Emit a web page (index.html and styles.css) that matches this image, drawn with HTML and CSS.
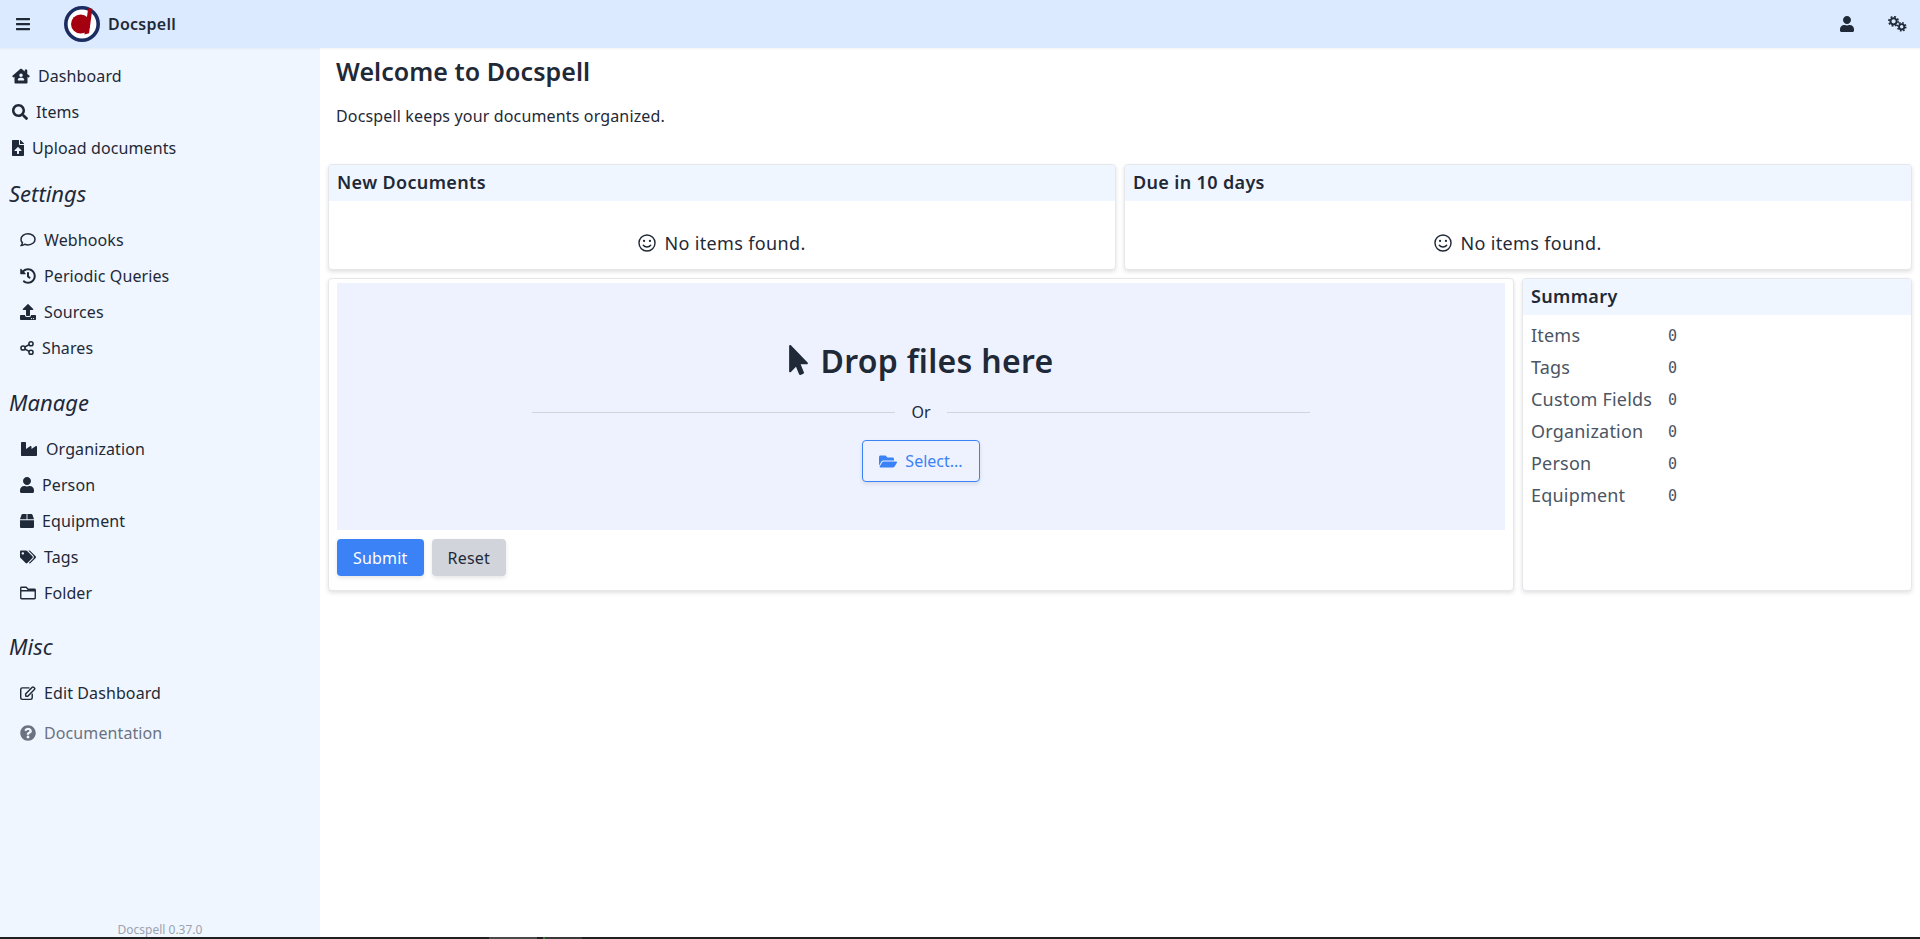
FILE: index.html
```html
<!DOCTYPE html>
<html lang="en">
<head>
  <meta charset="UTF-8">
  <title>Docspell</title>
  <link rel="stylesheet" href="styles.css">
</head>
<body>
  <svg class="icon-defs" width="0" height="0" aria-hidden="true">
    <symbol id="i-bars" viewBox="0 0 448 512"><path d="M16 132h416c8.837 0 16-7.163 16-16V76c0-8.837-7.163-16-16-16H16C7.163 60 0 67.163 0 76v40c0 8.837 7.163 16 16 16zm0 160h416c8.837 0 16-7.163 16-16v-40c0-8.837-7.163-16-16-16H16c-8.837 0-16 7.163-16 16v40c0 8.837 7.163 16 16 16zm0 160h416c8.837 0 16-7.163 16-16v-40c0-8.837-7.163-16-16-16H16c-8.837 0-16 7.163-16 16v40c0 8.837 7.163 16 16 16z"/></symbol>
    <symbol id="i-user" viewBox="0 0 448 512"><path d="M224 256c70.7 0 128-57.3 128-128S294.7 0 224 0 96 57.3 96 128s57.3 128 128 128zm89.6 32h-16.7c-22.2 10.2-46.9 16-72.9 16s-50.6-5.8-72.9-16h-16.7C60.2 288 0 348.2 0 422.4V464c0 26.5 21.5 48 48 48h352c26.5 0 48-21.5 48-48v-41.6c0-74.2-60.2-134.4-134.4-134.4z"/></symbol>
    <symbol id="i-cogs" viewBox="0 0 640 512">
      <g fill="none" stroke="currentColor">
        <circle cx="210" cy="170" r="100" stroke-width="64"/>
        <circle cx="210" cy="170" r="150" stroke-width="50" stroke-dasharray="60 57.8"/>
        <circle cx="470" cy="345" r="85" stroke-width="60"/>
        <circle cx="470" cy="345" r="130" stroke-width="50" stroke-dasharray="52 50.1"/>
      </g>
    </symbol>
    <symbol id="i-house" viewBox="0 0 576 512"><path fill-rule="evenodd" d="M288 20c6 0 11 2 16 6l104 86V64c0-9 7-16 16-16h48c9 0 16 7 16 16v125l73 60c8 7 9 18 3 25l-20 25c-6 8-17 9-25 3l-23-19v180c0 18-14 32-32 32H112c-18 0-32-14-32-32V279l-23 19c-8 6-19 5-25-3l-20-25c-6-7-5-18 3-25L272 26c5-4 10-6 16-6zM288 176a56 56 0 1 0 0 112 56 56 0 0 0 0-112zM200 400h176c9 0 16-7 16-16 0-40-32-72-72-72h-64c-40 0-72 32-72 72 0 9 7 16 16 16z"/></symbol>
    <symbol id="i-search" viewBox="0 0 512 512"><path d="M505 442.7L405.3 343c-4.5-4.5-10.6-7-17-7H372c27.6-35.3 44-79.7 44-128C416 93.1 322.9 0 208 0S0 93.1 0 208s93.1 208 208 208c48.3 0 92.7-16.4 128-44v16.3c0 6.4 2.5 12.5 7 17l99.7 99.7c9.4 9.4 24.6 9.4 33.9 0l28.3-28.3c9.4-9.4 9.4-24.6.1-34zM208 336c-70.7 0-128-57.2-128-128 0-70.7 57.2-128 128-128 70.7 0 128 57.2 128 128 0 70.7-57.2 128-128 128z"/></symbol>
    <symbol id="i-file-upload" viewBox="0 0 384 512"><path d="M224 136V0H24C10.7 0 0 10.7 0 24v464c0 13.3 10.7 24 24 24h336c13.3 0 24-10.7 24-24V160H248c-13.2 0-24-10.8-24-24zm65.18 216.01H224v80c0 8.84-7.16 16-16 16h-32c-8.84 0-16-7.16-16-16v-80H94.82c-14.28 0-21.41-17.29-11.27-27.36l96.42-95.7c6.65-6.61 17.39-6.61 24.04 0l96.42 95.7c10.15 10.07 3.03 27.36-11.25 27.36zM377 105L279.1 7c-4.5-4.5-10.6-7-17-7H256v128h128v-6.1c0-6.3-2.5-12.4-7-16.9z"/></symbol>
    <symbol id="i-comment" viewBox="0 0 512 512"><path fill="none" stroke="currentColor" stroke-width="48" stroke-linejoin="round" d="M256 56C132 56 32 136 32 236c0 42 18 80 48 110-10 40-30 68-48 90 40-2 88-16 122-44 32 12 66 20 102 20 124 0 224-80 224-176S380 56 256 56z"/></symbol>
    <symbol id="i-history" viewBox="0 0 512 512"><path d="M504 255.531c.253 136.64-111.18 248.372-247.82 248.468-59.015.042-113.223-20.53-155.822-54.911-11.077-8.94-11.905-25.541-1.839-35.607l11.267-11.267c8.609-8.609 22.353-9.551 31.891-1.984C173.062 425.135 212.781 440 256 440c101.705 0 184-82.311 184-184 0-101.705-82.311-184-184-184-48.814 0-93.149 18.969-126.068 49.932l50.754 50.754c10.08 10.08 2.941 27.314-11.313 27.314H24c-8.837 0-16-7.163-16-16V38.627c0-14.254 17.234-21.393 27.314-11.314l49.372 49.372C129.209 34.136 189.552 8 256 8c136.81 0 247.747 110.78 248 247.531zm-180.912 78.784l9.823-12.63c8.138-10.463 6.253-25.542-4.21-33.679L288 256.349V152c0-13.255-10.745-24-24-24h-16c-13.255 0-24 10.745-24 24v135.651l65.409 50.874c10.463 8.137 25.541 6.253 33.679-4.21z"/></symbol>
    <symbol id="i-upload" viewBox="0 0 512 512"><path d="M296 384h-80c-13.3 0-24-10.7-24-24V192h-87.7c-17.8 0-26.7-21.5-14.1-34.1L242.3 5.7c7.5-7.5 19.8-7.5 27.3 0l152.2 152.2c12.6 12.6 3.7 34.1-14.1 34.1H320v168c0 13.3-10.7 24-24 24zm216-8v112c0 13.3-10.7 24-24 24H24c-13.3 0-24-10.7-24-24V376c0-13.3 10.7-24 24-24h136v8c0 30.9 25.1 56 56 56h80c30.9 0 56-25.1 56-56v-8h136c13.3 0 24 10.7 24 24zm-124 88c0-11-9-20-20-20s-20 9-20 20 9 20 20 20 20-9 20-20zm64 0c0-11-9-20-20-20s-20 9-20 20 9 20 20 20 20-9 20-20z"/></symbol>
    <symbol id="i-share" viewBox="0 0 512 512"><g fill="none" stroke="currentColor" stroke-width="56"><circle cx="110" cy="256" r="76"/><circle cx="402" cy="100" r="76"/><circle cx="402" cy="412" r="76"/><path d="M175 221L337 135M175 291L337 377"/></g></symbol>
    <symbol id="i-industry" viewBox="0 0 512 512"><path d="M475.115 163.781L336 252.309v-68.28c0-18.916-20.931-30.399-36.885-20.248L160 252.309V56c0-13.255-10.745-24-24-24H24C10.745 32 0 42.745 0 56v400c0 13.255 10.745 24 24 24h464c13.255 0 24-10.745 24-24V184.029c0-18.917-20.931-30.399-36.885-20.248z"/></symbol>
    <symbol id="i-box" viewBox="0 0 512 512"><path d="M509.5 184.6L458.9 32.8C452.4 13.2 434.1 0 413.4 0H272v192h238.7c-.4-2.5-.4-5-1.2-7.4zM240 0H98.6c-20.7 0-39 13.2-45.5 32.8L2.5 184.6c-.8 2.4-.8 4.9-1.2 7.4H240V0zM0 224v240c0 26.5 21.5 48 48 48h416c26.5 0 48-21.5 48-48V224H0z"/></symbol>
    <symbol id="i-tags" viewBox="0 0 640 512"><path d="M497.941 225.941L286.059 14.059A48 48 0 0 0 252.118 0H48C21.49 0 0 21.49 0 48v204.118a48 48 0 0 0 14.059 33.941l211.882 211.882c18.744 18.745 49.136 18.746 67.882 0l204.118-204.118c18.745-18.745 18.745-49.137 0-67.882zM112 160c-26.51 0-48-21.49-48-48s21.49-48 48-48 48 21.49 48 48-21.49 48-48 48zm513.941 133.823L421.823 497.941c-18.745 18.745-49.137 18.745-67.882 0l-.36-.36L527.64 323.522c16.999-16.999 26.36-39.6 26.36-63.64s-9.362-46.641-26.36-63.64L331.397 0h48.721a48 48 0 0 1 33.941 14.059l211.882 211.882c18.745 18.745 18.745 49.137 0 67.882z"/></symbol>
    <symbol id="i-folder" viewBox="0 0 512 512"><path fill="none" stroke="currentColor" stroke-width="44" stroke-linejoin="round" d="M48 72h152l56 64h208c13 0 24 11 24 24v256c0 13-11 24-24 24H48c-13 0-24-11-24-24V96c0-13 11-24 24-24zM24 184h464"/></symbol>
    <symbol id="i-edit" viewBox="0 0 576 512"><path fill="none" stroke="currentColor" stroke-width="52" stroke-linecap="round" stroke-linejoin="round" d="M440 300v130c0 32-24 56-56 56H82c-32 0-56-24-56-56V128c0-32 24-56 56-56h240M210 370l-10-76L440 50c14-14 36-14 50 0l30 30c14 14 14 36 0 50L280 374z"/></symbol>
    <symbol id="i-question" viewBox="0 0 512 512"><path d="M504 256c0 136.997-111.043 248-248 248S8 392.997 8 256C8 119.083 119.043 8 256 8s248 111.083 248 248zM262.655 90c-54.497 0-89.255 22.957-116.549 63.758-3.536 5.286-2.353 12.415 2.715 16.258l34.699 26.31c5.205 3.947 12.621 3.008 16.665-2.122 17.864-22.658 30.113-35.797 57.303-35.797 20.429 0 45.698 13.148 45.698 32.958 0 14.976-12.363 22.667-32.534 33.976C247.128 238.528 216 254.941 216 296v4c0 6.627 5.373 12 12 12h56c6.627 0 12-5.373 12-12v-1.333c0-28.462 83.186-29.647 83.186-106.667 0-58.002-60.165-102-116.531-102zM256 338c-25.365 0-46 20.635-46 46 0 25.364 20.635 46 46 46s46-20.636 46-46c0-25.365-20.635-46-46-46z"/></symbol>
    <symbol id="i-smile" viewBox="0 0 512 512"><g fill="none" stroke="currentColor" stroke-width="40" stroke-linecap="round"><circle cx="256" cy="256" r="228"/><path d="M150 320c50 64 162 64 212 0"/></g><circle cx="172" cy="196" r="32"/><circle cx="340" cy="196" r="32"/></symbol>
    <symbol id="i-pointer" viewBox="0 0 320 512"><path d="M302.189 329.126H196.105l55.831 135.993c3.889 9.428-.555 19.999-9.444 23.999l-49.165 21.427c-9.165 4-19.443-.571-23.332-9.714l-53.053-129.136-86.664 89.138C18.729 472.71 0 463.554 0 447.977V18.299C0 1.899 19.921-6.096 30.277 5.443l284.412 292.542c11.472 11.179 3.007 31.141-12.5 31.141z"/></symbol>
    <symbol id="i-folder-open" viewBox="0 0 576 512"><path d="M572.694 292.093L500.27 416.248A63.997 63.997 0 0 1 444.989 448H45.025c-18.523 0-30.064-20.093-20.731-36.093l72.424-124.155A64 64 0 0 1 152 256h399.964c18.523 0 30.064 20.093 20.73 36.093zM152 224h328v-48c0-26.51-21.49-48-48-48H272l-64-64H48C21.49 64 0 85.49 0 112v278.046l69.077-118.418C86.214 242.25 117.989 224 152 224z"/></symbol>
  </svg>

  <header class="topbar">
    <a class="menu-btn"><svg class="icon w-14"><use href="#i-bars"/></svg></a>
    <svg class="logo" viewBox="0 0 36 36">
      <circle cx="18" cy="18" r="16.2" fill="#fff" stroke="#1b2c63" stroke-width="3.6"/>
      <circle cx="16.6" cy="18" r="9.6" fill="#a50010"/>
      <path d="M24.2 2.2l4.2.6-3.4 24.4-4.6 1.4z" fill="#a50010"/>
    </svg>
    <span class="brand">Docspell</span>
    <span class="topbar-right">
      <svg class="icon w-14"><use href="#i-user"/></svg>
      <svg class="icon w-20"><use href="#i-cogs"/></svg>
    </span>
  </header>

  <div class="layout">
    <nav class="sidebar">
      <a class="nav-item"><svg class="icon w-18"><use href="#i-house"/></svg>Dashboard</a>
      <a class="nav-item"><svg class="icon w-16"><use href="#i-search"/></svg>Items</a>
      <a class="nav-item"><svg class="icon w-12"><use href="#i-file-upload"/></svg>Upload documents</a>

      <h3 class="nav-title">Settings</h3>
      <a class="nav-item sub"><svg class="icon w-16"><use href="#i-comment"/></svg>Webhooks</a>
      <a class="nav-item sub"><svg class="icon w-16"><use href="#i-history"/></svg>Periodic Queries</a>
      <a class="nav-item sub"><svg class="icon w-16"><use href="#i-upload"/></svg>Sources</a>
      <a class="nav-item sub"><svg class="icon w-14"><use href="#i-share"/></svg>Shares</a>

      <h3 class="nav-title spaced">Manage</h3>
      <a class="nav-item sub"><svg class="icon w-18"><use href="#i-industry"/></svg>Organization</a>
      <a class="nav-item sub"><svg class="icon w-14"><use href="#i-user"/></svg>Person</a>
      <a class="nav-item sub"><svg class="icon w-14"><use href="#i-box"/></svg>Equipment</a>
      <a class="nav-item sub"><svg class="icon w-16"><use href="#i-tags"/></svg>Tags</a>
      <a class="nav-item sub"><svg class="icon w-16"><use href="#i-folder"/></svg>Folder</a>

      <h3 class="nav-title spaced">Misc</h3>
      <a class="nav-item sub"><svg class="icon w-16"><use href="#i-edit"/></svg>Edit Dashboard</a>
      <a class="nav-item sub muted"><svg class="icon w-16"><use href="#i-question"/></svg>Documentation</a>

      <div class="version">Docspell 0.37.0</div>
    </nav>

    <main class="content">
      <div class="intro">
        <h1>Welcome to Docspell</h1>
        <p>Docspell keeps your documents organized.</p>
      </div>

      <div class="row row-even">
        <section class="card">
          <h2 class="card-head">New Documents</h2>
          <div class="empty"><svg class="icon w-18"><use href="#i-smile"/></svg>No items found.</div>
        </section>
        <section class="card">
          <h2 class="card-head">Due in 10 days</h2>
          <div class="empty"><svg class="icon w-18"><use href="#i-smile"/></svg>No items found.</div>
        </section>
      </div>

      <div class="row row-upload">
        <section class="card upload-card">
          <div class="dropzone">
            <div class="drop-title"><svg class="icon w-20"><use href="#i-pointer"/></svg>Drop files here</div>
            <div class="or-line"><span>Or</span></div>
            <button class="btn-select"><svg class="icon w-18"><use href="#i-folder-open"/></svg>Select...</button>
          </div>
          <div class="actions">
            <button class="btn btn-primary">Submit</button>
            <button class="btn btn-secondary">Reset</button>
          </div>
        </section>
        <section class="card">
          <h2 class="card-head">Summary</h2>
          <table class="summary">
            <tr><td>Items</td><td class="num">0</td></tr>
            <tr><td>Tags</td><td class="num">0</td></tr>
            <tr><td>Custom Fields</td><td class="num">0</td></tr>
            <tr><td>Organization</td><td class="num">0</td></tr>
            <tr><td>Person</td><td class="num">0</td></tr>
            <tr><td>Equipment</td><td class="num">0</td></tr>
          </table>
        </section>
      </div>
    </main>
  </div>
  <div class="taskbar"></div>
</body>
</html>
```

FILE: styles.css
```css
* {
  box-sizing: border-box;
}

html, body {
  height: 100%;
}

body {
  margin: 0;
  display: flex;
  flex-direction: column;
  font-family: "Noto Sans", sans-serif;
  font-size: 16px;
  color: #1f2937;
  background-color: #fff;
  overflow: hidden;
}

.icon-defs {
  position: absolute;
}

.icon {
  display: block;
  flex: none;
  height: 16px;
  fill: currentColor;
}

.w-12 { width: 12px; }
.w-14 { width: 14px; }
.w-16 { width: 16px; }
.w-18 { width: 18px; }
.w-20 { width: 20px; }

/* top bar */
.topbar {
  flex: none;
  height: 48px;
  display: flex;
  align-items: center;
  padding: 0 13px 0 16px;
  background-color: #dbeafe;
  box-shadow: 0 1px 2px rgba(0, 0, 0, 0.05);
  z-index: 1;
}

.logo {
  width: 36px;
  height: 36px;
  margin-left: 34px;
  margin-right: 8px;
}

.brand {
  font-weight: 600;
  font-size: 16px;
  letter-spacing: 0.25px;
}

.topbar-right {
  margin-left: auto;
  display: flex;
  align-items: center;
  gap: 33px;
}

/* sidebar */
.layout {
  flex: 1;
  min-height: 0;
  display: flex;
}

.sidebar {
  position: relative;
  flex: none;
  width: 320px;
  padding: 10px 12px 0;
  background-color: #eff6ff;
}

.nav-item {
  height: 36px;
  display: flex;
  align-items: center;
  gap: 8px;
  letter-spacing: 0.1px;
  color: #1f2937;
}

.nav-item.sub {
  margin-left: 8px;
}

.nav-item.muted {
  margin-top: 4px;
  color: #6b7280;
}

.nav-title {
  margin: 0 0 0 -3px;
  height: 56px;
  padding-top: 12px;
  font-size: 22px;
  line-height: 30px;
  font-weight: 400;
  font-style: italic;
}

.nav-title.spaced {
  margin-top: 8.5px;
}

.version {
  position: absolute;
  left: 0;
  right: 0;
  bottom: -1px;
  text-align: center;
  font-size: 12px;
  color: #9ca3af;
}

/* main area */
.content {
  flex: 1;
  min-width: 0;
  padding: 0 8px;
}

.intro {
  padding: 7px 8px 0;
  height: 116px;
}

.intro h1 {
  margin: 0;
  font-size: 25px;
  line-height: 32px;
  font-weight: 600;
  letter-spacing: 0.05px;
}

.intro p {
  margin: 17px 0 0;
  line-height: 24px;
  letter-spacing: 0.15px;
}

.row {
  display: grid;
  gap: 8px;
  margin-bottom: 8px;
}

.row-even {
  grid-template-columns: 1fr 1fr;
  height: 106px;
}

.row-upload {
  grid-template-columns: 1186px 1fr;
  height: 313px;
}

.card {
  border: 1px solid #e5e7eb;
  border-radius: 4px;
  background-color: #fff;
  box-shadow: 0 2px 4px rgba(0, 0, 0, 0.12);
  overflow: hidden;
}

.card-head {
  margin: 0;
  height: 36px;
  padding: 0 8px 2px;
  display: flex;
  align-items: center;
  font-size: 18px;
  letter-spacing: 0.35px;
  font-weight: 600;
  background-color: #eff6ff;
}

.empty {
  display: flex;
  align-items: center;
  justify-content: center;
  gap: 8px;
  padding-top: 28px;
  font-size: 18px;
  letter-spacing: 0.35px;
  line-height: 28px;
}

.empty .icon {
  height: 18px;
}

/* upload */
.upload-card {
  padding: 4px 8px 0;
}

.dropzone {
  height: 247px;
  display: flex;
  flex-direction: column;
  align-items: center;
  padding-top: 57px;
  background-color: #eef2ff;
}

.drop-title {
  display: flex;
  align-items: center;
  gap: 11px;
  height: 40px;
  font-size: 32px;
  letter-spacing: 0.3px;
  font-weight: 600;
}

.drop-title .icon {
  width: 21px;
  height: 30px;
}

.or-line {
  width: 778px;
  margin-top: 20px;
  display: flex;
  align-items: center;
  gap: 16px;
  line-height: 24px;
}

.or-line::before,
.or-line::after {
  content: "";
  flex: 1;
  border-top: 1px solid #d1d5db;
}

.btn-select {
  margin-top: 16px;
  height: 42px;
  width: 118px;
  display: flex;
  align-items: center;
  justify-content: center;
  gap: 8px;
  font: inherit;
  color: #3b82f6;
  background-color: #eef2ff;
  border: 1px solid #3b82f6;
  border-radius: 4px;
  box-shadow: 0 2px 4px rgba(0, 0, 0, 0.1);
}

.btn-select .icon {
  height: 17px;
}

.actions {
  display: flex;
  gap: 8px;
  margin-top: 9px;
}

.btn {
  height: 37px;
  padding: 0 16px;
  font: inherit;
  letter-spacing: 0.2px;
  border: none;
  border-radius: 4px;
  box-shadow: 0 2px 4px rgba(0, 0, 0, 0.1);
}

.btn-primary {
  color: #fff;
  background-color: #3b82f6;
}

.btn-secondary {
  color: #1f2937;
  background-color: #d1d5db;
}

/* summary table */
.summary {
  margin: 4px 8px;
  border-collapse: collapse;
  font-size: 18px;
  letter-spacing: 0.2px;
  color: #4b5563;
}

.summary td {
  padding: 0;
  height: 32px;
}

.summary .num {
  padding-left: 16px;
  padding-top: 2px;
  font-family: "DejaVu Sans Mono", monospace;
  font-size: 15px;
}

.taskbar {
  flex: none;
  height: 2px;
  background: linear-gradient(to right, #202020 489px, #4a4a4a 489px, #4a4a4a 537px, #202020 537px, #202020 543px, #2f7d32 543px, #2f7d32 545px, #3a3a3a 545px, #3a3a3a 582px, #202020 582px);
}
```
